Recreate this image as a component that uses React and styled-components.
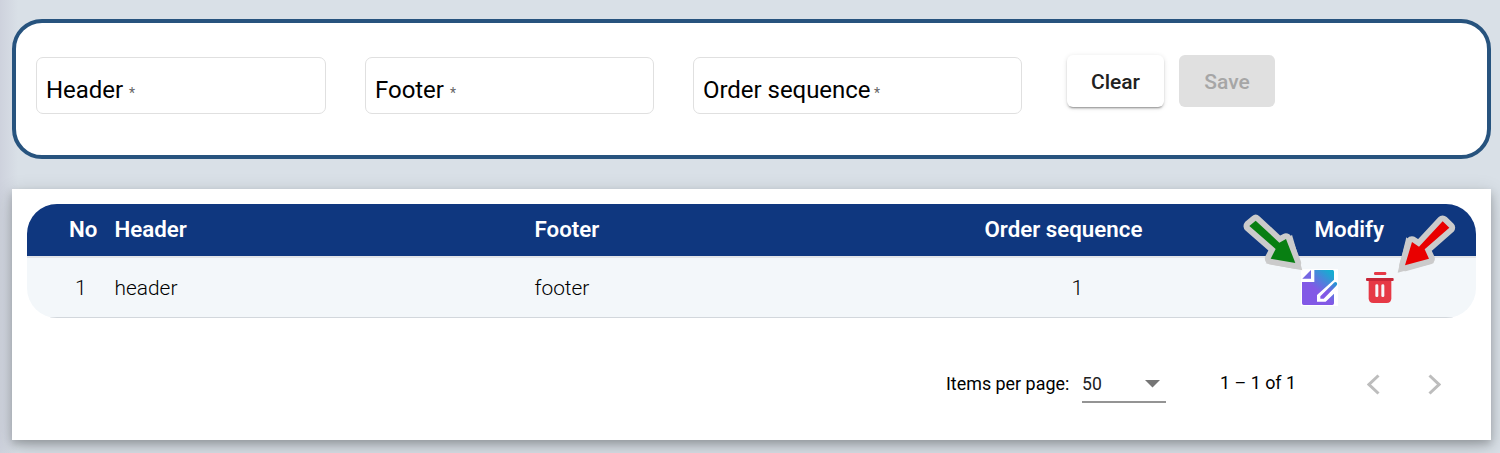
import React from 'react';
import styled, { createGlobalStyle, css } from 'styled-components';

const GlobalStyle = createGlobalStyle`
  * { box-sizing: border-box; }
  body {
    margin: 0;
    height: 453px;
    overflow: hidden;
    background: #d9e0e7;
    font-family: Roboto, "Liberation Sans", sans-serif;
    color: #000;
  }
`;

const Page = styled.main`
  height: 453px;
  padding: 19px 9px 13px 12px;
  overflow: hidden;
  display: flex;
  flex-direction: column;
  gap: 30px;
  background: linear-gradient(90deg, #ced2dd 0, #d9e0e7 18px);
`;

const FormCard = styled.form`
  display: flex;
  align-items: flex-start;
  height: 140px;
  flex: none;
  padding: 32px 20px 0;
  border: 4px solid #27537e;
  border-radius: 30px;
  background: #fff;
`;

const Field = styled.label`
  width: ${(p) => p.$width}px;
  height: 57px;
  margin: 2px ${(p) => p.$after}px 0 0;
  padding: 17px 0 0 9px;
  border: 1px solid #e0e0e0;
  border-radius: 7px;
  font-size: 24px;
  line-height: 30px;
  letter-spacing: -0.04px;
  white-space: nowrap;
`;

const FieldName = styled.span`
  display: inline-block;
  width: ${(p) => p.$width}px;
`;

const Required = styled.span`
  margin-left: ${(p) => p.$gap}px;
  font-size: 14px;
  color: #666;
`;

const Button = styled.button`
  width: ${(p) => (p.$muted ? 96 : 97)}px;
  height: 52px;
  margin-right: 15px;
  padding: 2px 0 0;
  border: 0;
  border-radius: 6px;
  font: 500 21px/50px Roboto, "Liberation Sans", sans-serif;
  ${(p) =>
    p.$muted
      ? css`
          background: #e0e0e0;
          color: #a6a6a6;
        `
      : css`
          background: #fff;
          color: #212121;
          box-shadow: 0 3px 1px -2px rgba(0, 0, 0, 0.2),
            0 2px 2px 0 rgba(0, 0, 0, 0.14), 0 1px 5px 0 rgba(0, 0, 0, 0.12);
        `}
`;

const TableCard = styled.section`
  position: relative;
  height: 251px;
  flex: none;
  padding: 15px;
  background: #fff;
  box-shadow: 0 4px 8px rgba(0, 0, 0, 0.2), 0 6px 20px rgba(0, 0, 0, 0.19);
`;

const Table = styled.div`
  height: 114px;
  border-radius: 30px;
  overflow: hidden;
`;

const Row = styled.div`
  display: grid;
  grid-template-columns: 87.5px 420px 450px 330px 161.5px;
  align-items: center;
  line-height: 28px;
`;

const HeadRow = styled(Row)`
  height: 52px;
  padding-bottom: 2px;
  background: #0f377f;
  color: #fff;
  font-size: 22.3px;
  font-weight: 600;
`;

const BodyRow = styled(Row)`
  height: 62px;
  border-top: 2px solid #e2e4e8;
  border-bottom: 1px solid #d2d7dc;
  background: #f3f7fa;
  font-size: 20.9px;
  font-weight: 300;
`;

const Cell = styled.div`
  padding-left: ${(p) => p.$indent || 0}px;
  white-space: nowrap;
`;

const Actions = styled.div`
  display: flex;
  align-items: center;
  gap: 28px;
  margin-left: -14px;
  svg { display: block; }
`;

const Pointers = styled.svg`
  position: absolute;
  top: 11px;
  right: -9px;
  pointer-events: none;
`;

const Paginator = styled.nav`
  display: flex;
  align-items: flex-start;
  justify-content: flex-end;
  padding: 51px 35px 0 0;
  font-size: 17.6px;
  line-height: 28px;
`;

const PageLabel = styled.span`
  width: 136px;
  padding-top: 1px;
  font-size: 17.9px;
  white-space: nowrap;
`;

const PageSize = styled.div`
  display: flex;
  align-items: flex-start;
  justify-content: space-between;
  width: 84px;
  height: 34px;
  padding: 1px 6px 0 0;
  border-bottom: 2px solid #949494;
  color: #212121;
  svg { margin-top: 10px; }
`;

const Range = styled.span`
  width: 147px;
  margin-left: 54px;
  font-size: 17.9px;
  white-space: nowrap;
`;

const Chevron = styled.svg`
  margin: 5px 0 0 ${(p) => p.$before}px;
`;

const EditIcon = () => (
  <svg width="37" height="37" viewBox="0 0 111 111">
    <defs>
      <linearGradient id="sheet" x1="96" y1="2" x2="45" y2="62" gradientUnits="userSpaceOnUse">
        <stop offset="0.15" stopColor="#18abd1" />
        <stop offset="1" stopColor="#8259e6" />
      </linearGradient>
      <linearGradient id="pencil" x1="108" y1="38" x2="78" y2="68" gradientUnits="userSpaceOnUse">
        <stop offset="0.1" stopColor="#1f98d2" />
        <stop offset="1" stopColor="#8259e6" />
      </linearGradient>
    </defs>
    <path d="M0 0H111V111H0Z" fill="#fff" />
    <path d="M40 3H95Q99 3 99 8V32L48 78V98H74L99 74V103Q99 108 94 108H8Q3 108 3 103V39H40Z" fill="url(#sheet)" />
    <path d="M30 3V29H4Z" fill="#7466e2" />
    <path d="M58 82L99 41Q104 37 108 42Q110 46 106 50L68 89H58Z" fill="url(#pencil)" />
  </svg>
);

const TrashIcon = () => (
  <svg width="28" height="32" viewBox="0 0 84 96">
    <rect x="24" y="0" width="37" height="9" rx="4" fill="#e63946" />
    <path d="M8 24H76V79Q76 93 62 93H22Q8 93 8 79Z" fill="#e63946" />
    <rect x="0" y="18" width="83" height="9" rx="3" fill="#c72738" />
    <rect x="28" y="37" width="9" height="38" rx="4" fill="#f7f7fa" />
    <rect x="46" y="37" width="9" height="38" rx="4" fill="#f7f7fa" />
  </svg>
);

const Arrow = ({ shape, head, color }) => (
  <g>
    <polygon points={head} fill="#cbcbcb" />
    <polygon points={shape} fill="#cbcbcb" stroke="#cbcbcb" strokeWidth="35" strokeLinejoin="round" />
    <polygon points={shape} fill={color} />
  </g>
);

export default function App() {
  return (
    <>
      <GlobalStyle />
      <Page>
        <FormCard>
          <Field $width={290} $after={39}>
            <FieldName $width={77}>Header</FieldName>
            <Required $gap={6}>*</Required>
          </Field>
          <Field $width={289} $after={39}>
            <FieldName $width={69}>Footer</FieldName>
            <Required $gap={6}>*</Required>
          </Field>
          <Field $width={329} $after={45}>
            <FieldName $width={168}>Order sequence</FieldName>
            <Required $gap={3}>*</Required>
          </Field>
          <Button type="button">Clear</Button>
          <Button type="button" $muted disabled>Save</Button>
        </FormCard>

        <TableCard>
          <Table>
            <HeadRow>
              <Cell $indent={42}>No</Cell>
              <Cell>Header</Cell>
              <Cell>Footer</Cell>
              <Cell>Order sequence</Cell>
              <Cell>Modify</Cell>
            </HeadRow>
            <BodyRow>
              <Cell $indent={48}>1</Cell>
              <Cell>header</Cell>
              <Cell>footer</Cell>
              <Cell $indent={87}>1</Cell>
              <Actions>
                <EditIcon />
                <TrashIcon />
              </Actions>
            </BodyRow>
          </Table>
          <Paginator>
            <PageLabel>Items per page:</PageLabel>
            <PageSize>
              50
              <svg width="15" height="8" viewBox="0 0 15 8">
                <path d="M0 0H15L7.5 7.5Z" fill="#757575" />
              </svg>
            </PageSize>
            <Range>1 – 1 of 1</Range>
            <Chevron $before={0} width="14" height="21" viewBox="0 0 14 21">
              <path d="M11.5 1.5L2 10.5L11.5 19.5" fill="none" stroke="#bdbdbd" strokeWidth="3" />
            </Chevron>
            <Chevron $before={46} width="14" height="21" viewBox="0 0 14 21">
              <path d="M2.5 1.5L12 10.5L2.5 19.5" fill="none" stroke="#bdbdbd" strokeWidth="3" />
            </Chevron>
          </Paginator>
          <Pointers width="270" height="130" viewBox="0 0 810 390">
            <Arrow
              color="#087f12"
              shape="58,78 77,62 148,128 168,117 196,189 122,176 137,147"
              head="186,104 217,211 107,190"
            />
            <Arrow
              color="#e90000"
              shape="638,64 658,83 584,148 597,176 525,196 546,126 567,140"
              head="529,112 503,218 612,189"
            />
          </Pointers>
        </TableCard>
      </Page>
    </>
  );
}
